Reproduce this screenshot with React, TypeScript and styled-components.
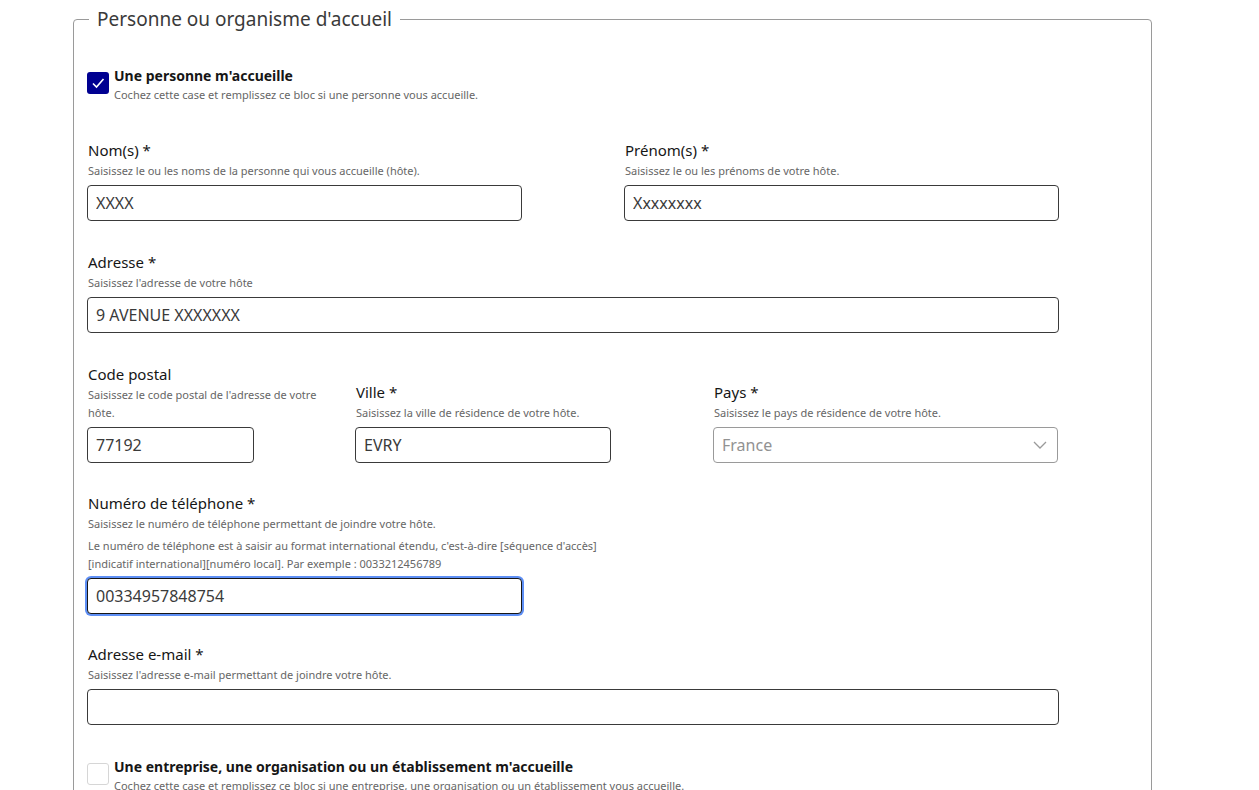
import React from "react";
import styled, { createGlobalStyle, css } from "styled-components";

const Global = createGlobalStyle`
  html, body { margin: 0; padding: 0; background: #fff; }
  body { font-family: "Noto Sans", "Liberation Sans", sans-serif; color: #161616; }
  * { box-sizing: border-box; }
`;

const Page = styled.div`
  width: 1259px;
  height: 790px;
  overflow: hidden;
  padding: 5px 0 0 73px;
`;

const Fieldset = styled.fieldset`
  width: 1079px;
  margin: 0;
  padding: 0 92px 40px 13px;
  border: 1px solid #9a9a9a;
  border-radius: 4px;
  min-inline-size: 0;
`;

const Legend = styled.legend`
  margin-left: 2px;
  padding: 0 8px;
  font-size: 19px;
  line-height: 28px;
  color: #3a3a3a;
`;

const CheckRow = styled.div<{ $top: number }>`
  display: flex;
  gap: 5px;
  margin-top: ${(p) => p.$top}px;
`;

const Box = styled.span<{ $checked?: boolean }>`
  flex: none;
  width: 22px;
  height: 22px;
  margin-top: 6px;
  border-radius: 3px;
  display: flex;
  align-items: center;
  justify-content: center;
  ${(p) =>
    p.$checked
      ? css`background: #000091;`
      : css`border: 1px solid #d6d6d6;`}
`;

const CheckText = styled.div`
  display: flex;
  flex-direction: column;
`;

const CheckLabel = styled.span`
  font-size: 14px;
  font-weight: 700;
  line-height: 20px;
  color: #161616;
`;

const Hint = styled.span<{ $top?: number; $width?: number }>`
  display: block;
  font-size: 11px;
  line-height: 18px;
  color: #666;
  margin-top: ${(p) => p.$top ?? 0}px;
  ${(p) => p.$width && css`width: ${p.$width}px;`}
`;

const Row2 = styled.div<{ $top: number }>`
  display: grid;
  grid-template-columns: 1fr 1fr;
  column-gap: 102px;
  margin-top: ${(p) => p.$top}px;
`;

const Row3 = styled.div<{ $top: number }>`
  display: grid;
  grid-template-columns: 268px 358px 345px;
  align-items: end;
  margin-top: ${(p) => p.$top}px;
`;

const Field = styled.div<{ $top?: number; $width?: number }>`
  display: flex;
  flex-direction: column;
  margin-top: ${(p) => p.$top ?? 0}px;
  ${(p) => p.$width && css`width: ${p.$width}px;`}
`;

const Label = styled.label`
  font-size: 15px;
  line-height: 20px;
  padding-left: 1px;
  margin-bottom: 2px;
  color: #161616;
`;

const HintGroup = styled.div<{ $width?: number }>`
  padding-left: 1px;
  ${(p) => p.$width && css`width: ${p.$width}px;`}
`;

const Input = styled.input<{ $focused?: boolean; $width?: number }>`
  margin-top: 5px;
  height: 36px;
  width: ${(p) => (p.$width ? `${p.$width}px` : "100%")};
  border: 1px solid #3a3a3a;
  border-radius: 4px;
  padding: 0 8px;
  font-family: inherit;
  font-size: 16px;
  color: #3a3a3a;
  background: #fff;
  outline: none;
  ${(p) =>
    p.$focused &&
    css`
      border-color: #161616;
      box-shadow: 0 0 0 2px #5e8ff5;
    `}
`;

const SelectBox = styled.div`
  margin-top: 5px;
  height: 36px;
  width: 100%;
  border: 1px solid #9a9a9a;
  border-radius: 4px;
  padding: 0 10px 0 8px;
  display: flex;
  align-items: center;
  justify-content: space-between;
  font-size: 16px;
  color: #929292;
`;

const Check = () => (
  <svg width="14" height="12" viewBox="0 0 14 12">
    <path d="M2 6.5 L5.5 10 L12.5 2" fill="none" stroke="#fff" strokeWidth="1.6" />
  </svg>
);

const Chevron = () => (
  <svg width="14" height="8" viewBox="0 0 14 8">
    <path d="M1 1 L7 7 L13 1" fill="none" stroke="#9a9a9a" strokeWidth="1.3" />
  </svg>
);

export default function App() {
  return (
    <>
      <Global />
      <Page>
        <Fieldset>
          <Legend>Personne ou organisme d'accueil</Legend>
          <CheckRow $top={33}>
            <Box $checked>
              <Check />
            </Box>
            <CheckText>
              <CheckLabel>Une personne m'accueille</CheckLabel>
              <Hint>Cochez cette case et remplissez ce bloc si une personne vous accueille.</Hint>
            </CheckText>
          </CheckRow>

          <Row2 $top={36}>
            <Field>
              <Label>Nom(s) *</Label>
              <HintGroup>
                <Hint>Saisissez le ou les noms de la personne qui vous accueille (hôte).</Hint>
              </HintGroup>
              <Input defaultValue="XXXX" />
            </Field>
            <Field>
              <Label>Prénom(s) *</Label>
              <HintGroup>
                <Hint>Saisissez le ou les prénoms de votre hôte.</Hint>
              </HintGroup>
              <Input defaultValue="Xxxxxxxx" />
            </Field>
          </Row2>

          <Field $top={31}>
            <Label>Adresse *</Label>
            <HintGroup>
              <Hint>Saisissez l'adresse de votre hôte</Hint>
            </HintGroup>
            <Input defaultValue="9 AVENUE XXXXXXX" />
          </Field>

          <Row3 $top={31}>
            <Field>
              <Label>Code postal</Label>
              <HintGroup $width={240}>
                <Hint>Saisissez le code postal de l'adresse de votre hôte.</Hint>
              </HintGroup>
              <Input $width={167} defaultValue="77192" />
            </Field>
            <Field>
              <Label>Ville *</Label>
              <HintGroup>
                <Hint>Saisissez la ville de résidence de votre hôte.</Hint>
              </HintGroup>
              <Input $width={256} defaultValue="EVRY" />
            </Field>
            <Field>
              <Label>Pays *</Label>
              <HintGroup>
                <Hint>Saisissez le pays de résidence de votre hôte.</Hint>
              </HintGroup>
              <SelectBox>
                <span>France</span>
                <Chevron />
              </SelectBox>
            </Field>
          </Row3>

          <Field $top={30} $width={435}>
            <Label>Numéro de téléphone *</Label>
            <HintGroup>
              <Hint>Saisissez le numéro de téléphone permettant de joindre votre hôte.</Hint>
              <Hint $top={4} $width={520}>
                Le numéro de téléphone est à saisir au format international étendu, c'est-à-dire [séquence d'accès] [indicatif international][numéro local]. Par exemple : 0033212456789
              </Hint>
            </HintGroup>
            <Input $focused defaultValue="00334957848754" />
          </Field>

          <Field $top={30}>
            <Label>Adresse e-mail *</Label>
            <HintGroup>
              <Hint>Saisissez l'adresse e-mail permettant de joindre votre hôte.</Hint>
            </HintGroup>
            <Input defaultValue="" />
          </Field>

          <CheckRow $top={32}>
            <Box />
            <CheckText>
              <CheckLabel>Une entreprise, une organisation ou un établissement m'accueille</CheckLabel>
              <Hint>Cochez cette case et remplissez ce bloc si une entreprise, une organisation ou un établissement vous accueille.</Hint>
            </CheckText>
          </CheckRow>
        </Fieldset>
      </Page>
    </>
  );
}
